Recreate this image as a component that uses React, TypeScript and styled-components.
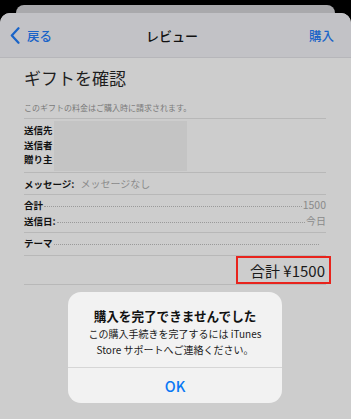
import React from "react";
import styled, { createGlobalStyle } from "styled-components";

const Global = createGlobalStyle`
  html, body { margin: 0; padding: 0; background: #000; }
  body { width: 351px; height: 419px; overflow: hidden; font-family: "Noto Sans CJK JP", "Noto Sans", sans-serif; }
  * { box-sizing: border-box; }
`;

const Screen = styled.div`
  width: 351px;
  height: 419px;
  display: flex;
  flex-direction: column;
  background: #000;
`;

const BackCard = styled.div`
  margin: 5px 16px 0;
  height: 8px;
  background: #a9a9ac;
  border-radius: 10px 10px 0 0;
`;

const Sheet = styled.div`
  flex: 1;
  position: relative;
  background: #cdcdcd;
  border-radius: 10px 10px 0 0;
  overflow: hidden;
`;

const NavBar = styled.div`
  height: 45px;
  background: #c2c2c6;
  border-bottom: 1px solid #b6b6ba;
  display: grid;
  grid-template-columns: 1fr auto 1fr;
  align-items: center;
  padding: 0 17px 0 10px;
`;

const NavButton = styled.div<{ $right?: boolean }>`
  display: flex;
  align-items: center;
  gap: 7px;
  justify-content: ${(p) => (p.$right ? "flex-end" : "flex-start")};
  color: #1a64c8;
  font-size: 12.5px;
  font-weight: 500;
`;

const NavTitle = styled.div`
  font-size: 13px;
  font-weight: 500;
  color: #111;
`;

const Content = styled.div`
  padding: 5px 25px 0 24px;
  display: flex;
  flex-direction: column;
`;

const Heading = styled.div`
  font-size: 17px;
  line-height: 30px;
  color: #1e1e1e;
  font-weight: 400;
`;

const Note = styled.div`
  margin-top: 9px;
  font-size: 8px;
  line-height: 12px;
  color: #7a7a7a;
  padding-bottom: 4px;
`;

const Section = styled.div<{ $pad?: string; $h?: number }>`
  border-top: 1px solid #b8b8b8;
  padding: ${(p) => p.$pad || "0"};
  height: ${(p) => (p.$h ? `${p.$h}px` : "auto")};
  display: flex;
  flex-direction: column;
`;

const Recipients = styled.div`
  display: flex;
  align-items: flex-start;
`;

const RecipientLabels = styled.div`
  display: flex;
  flex-direction: column;
  padding-top: 4px;
  width: 30px;
`;

const BoldLabel = styled.span`
  font-size: 9.5px;
  line-height: 14.5px;
  font-weight: 700;
  color: #111;
  white-space: nowrap;
`;

const Redacted = styled.div`
  width: 133px;
  height: 50px;
  margin-top: 2px;
  background: #c4c4c4;
`;

const MessageRow = styled.div`
  line-height: 21px;
  display: flex;
  align-items: baseline;
  gap: 6px;
`;

const GrayText = styled.span<{ $size?: number }>`
  font-size: ${(p) => p.$size || 9.5}px;
  color: #8a8a8a;
  white-space: nowrap;
`;

const LeaderRow = styled.div<{ $trail?: number }>`
  display: flex;
  align-items: baseline;
  line-height: 16px;
  padding-right: ${(p) => p.$trail || 0}px;
`;

const Dots = styled.span`
  flex: 1;
  margin: 0 1px;
  border-bottom: 1px dotted #9a9a9a;
  transform: translateY(-2px);
`;

const TotalRow = styled.div`
  display: flex;
  justify-content: flex-end;
  margin-right: -5px;
`;

const TotalBox = styled.div`
  width: 95px;
  height: 28px;
  border: 2px solid #e8231c;
  display: flex;
  align-items: center;
  justify-content: flex-end;
  padding-right: 4px;
  font-size: 15px;
  color: #1a1a1a;
`;

const Alert = styled.div`
  position: absolute;
  left: 68px;
  top: 279px;
  width: 214px;
  height: 111px;
  background: #f2f2f2;
  border-radius: 13px;
  display: flex;
  flex-direction: column;
  overflow: hidden;
`;

const AlertBody = styled.div`
  height: 75px;
  padding-top: 14px;
  display: flex;
  flex-direction: column;
  align-items: center;
  text-align: center;
`;

const AlertTitle = styled.div`
  font-size: 12.6px;
  font-weight: 700;
  line-height: 20px;
  color: #111;
`;

const AlertMessage = styled.div`
  font-size: 10px;
  line-height: 16px;
  color: #1a1a1a;
`;

const AlertButton = styled.div`
  flex: 1;
  border-top: 1px solid #d6d6d6;
  display: flex;
  align-items: center;
  justify-content: center;
  color: #0a78f5;
  font-size: 14.5px;
  font-weight: 500;
`;

const Chevron = () => (
  <svg width="10" height="17" viewBox="0 0 10 17">
    <path d="M8.5 1.2 L1.8 8.5 L8.5 15.8" fill="none" stroke="#1a64c8" strokeWidth="2.2" strokeLinecap="round" strokeLinejoin="round" />
  </svg>
);

export default function App() {
  return (
    <Screen>
      <Global />
      <BackCard />
      <Sheet>
        <NavBar>
          <NavButton>
            <Chevron />
            <span>戻る</span>
          </NavButton>
          <NavTitle>レビュー</NavTitle>
          <NavButton $right>購入</NavButton>
        </NavBar>
        <Content>
          <Heading>ギフトを確認</Heading>
          <Note>このギフトの料金はご購入時に請求されます。</Note>
          <Section $h={54}>
            <Recipients>
              <RecipientLabels>
                <BoldLabel>送信先</BoldLabel>
                <BoldLabel>送信者</BoldLabel>
                <BoldLabel>贈り主</BoldLabel>
              </RecipientLabels>
              <Redacted />
            </Recipients>
          </Section>
          <Section $h={22}>
            <MessageRow>
              <BoldLabel>メッセージ:</BoldLabel>
              <GrayText $size={10}>メッセージなし</GrayText>
            </MessageRow>
          </Section>
          <Section $h={38} $pad="2px 0 0">
            <LeaderRow>
              <BoldLabel>合計</BoldLabel>
              <Dots />
              <GrayText $size={10.5}>1500</GrayText>
            </LeaderRow>
            <LeaderRow>
              <BoldLabel>送信日:</BoldLabel>
              <Dots />
              <GrayText $size={10}>今日</GrayText>
            </LeaderRow>
          </Section>
          <Section $h={23} $pad="3px 0 0">
            <LeaderRow $trail={6}>
              <BoldLabel>テーマ</BoldLabel>
              <Dots />
            </LeaderRow>
          </Section>
          <Section $h={29}>
            <TotalRow>
              <TotalBox>合計 ¥1500</TotalBox>
            </TotalRow>
          </Section>
          <Section />
        </Content>
        <Alert>
          <AlertBody>
            <AlertTitle>購入を完了できませんでした</AlertTitle>
            <AlertMessage>
              この購入手続きを完了するには iTunes
              <br />
              Store サポートへご連絡ください。
            </AlertMessage>
          </AlertBody>
          <AlertButton>OK</AlertButton>
        </Alert>
      </Sheet>
    </Screen>
  );
}
